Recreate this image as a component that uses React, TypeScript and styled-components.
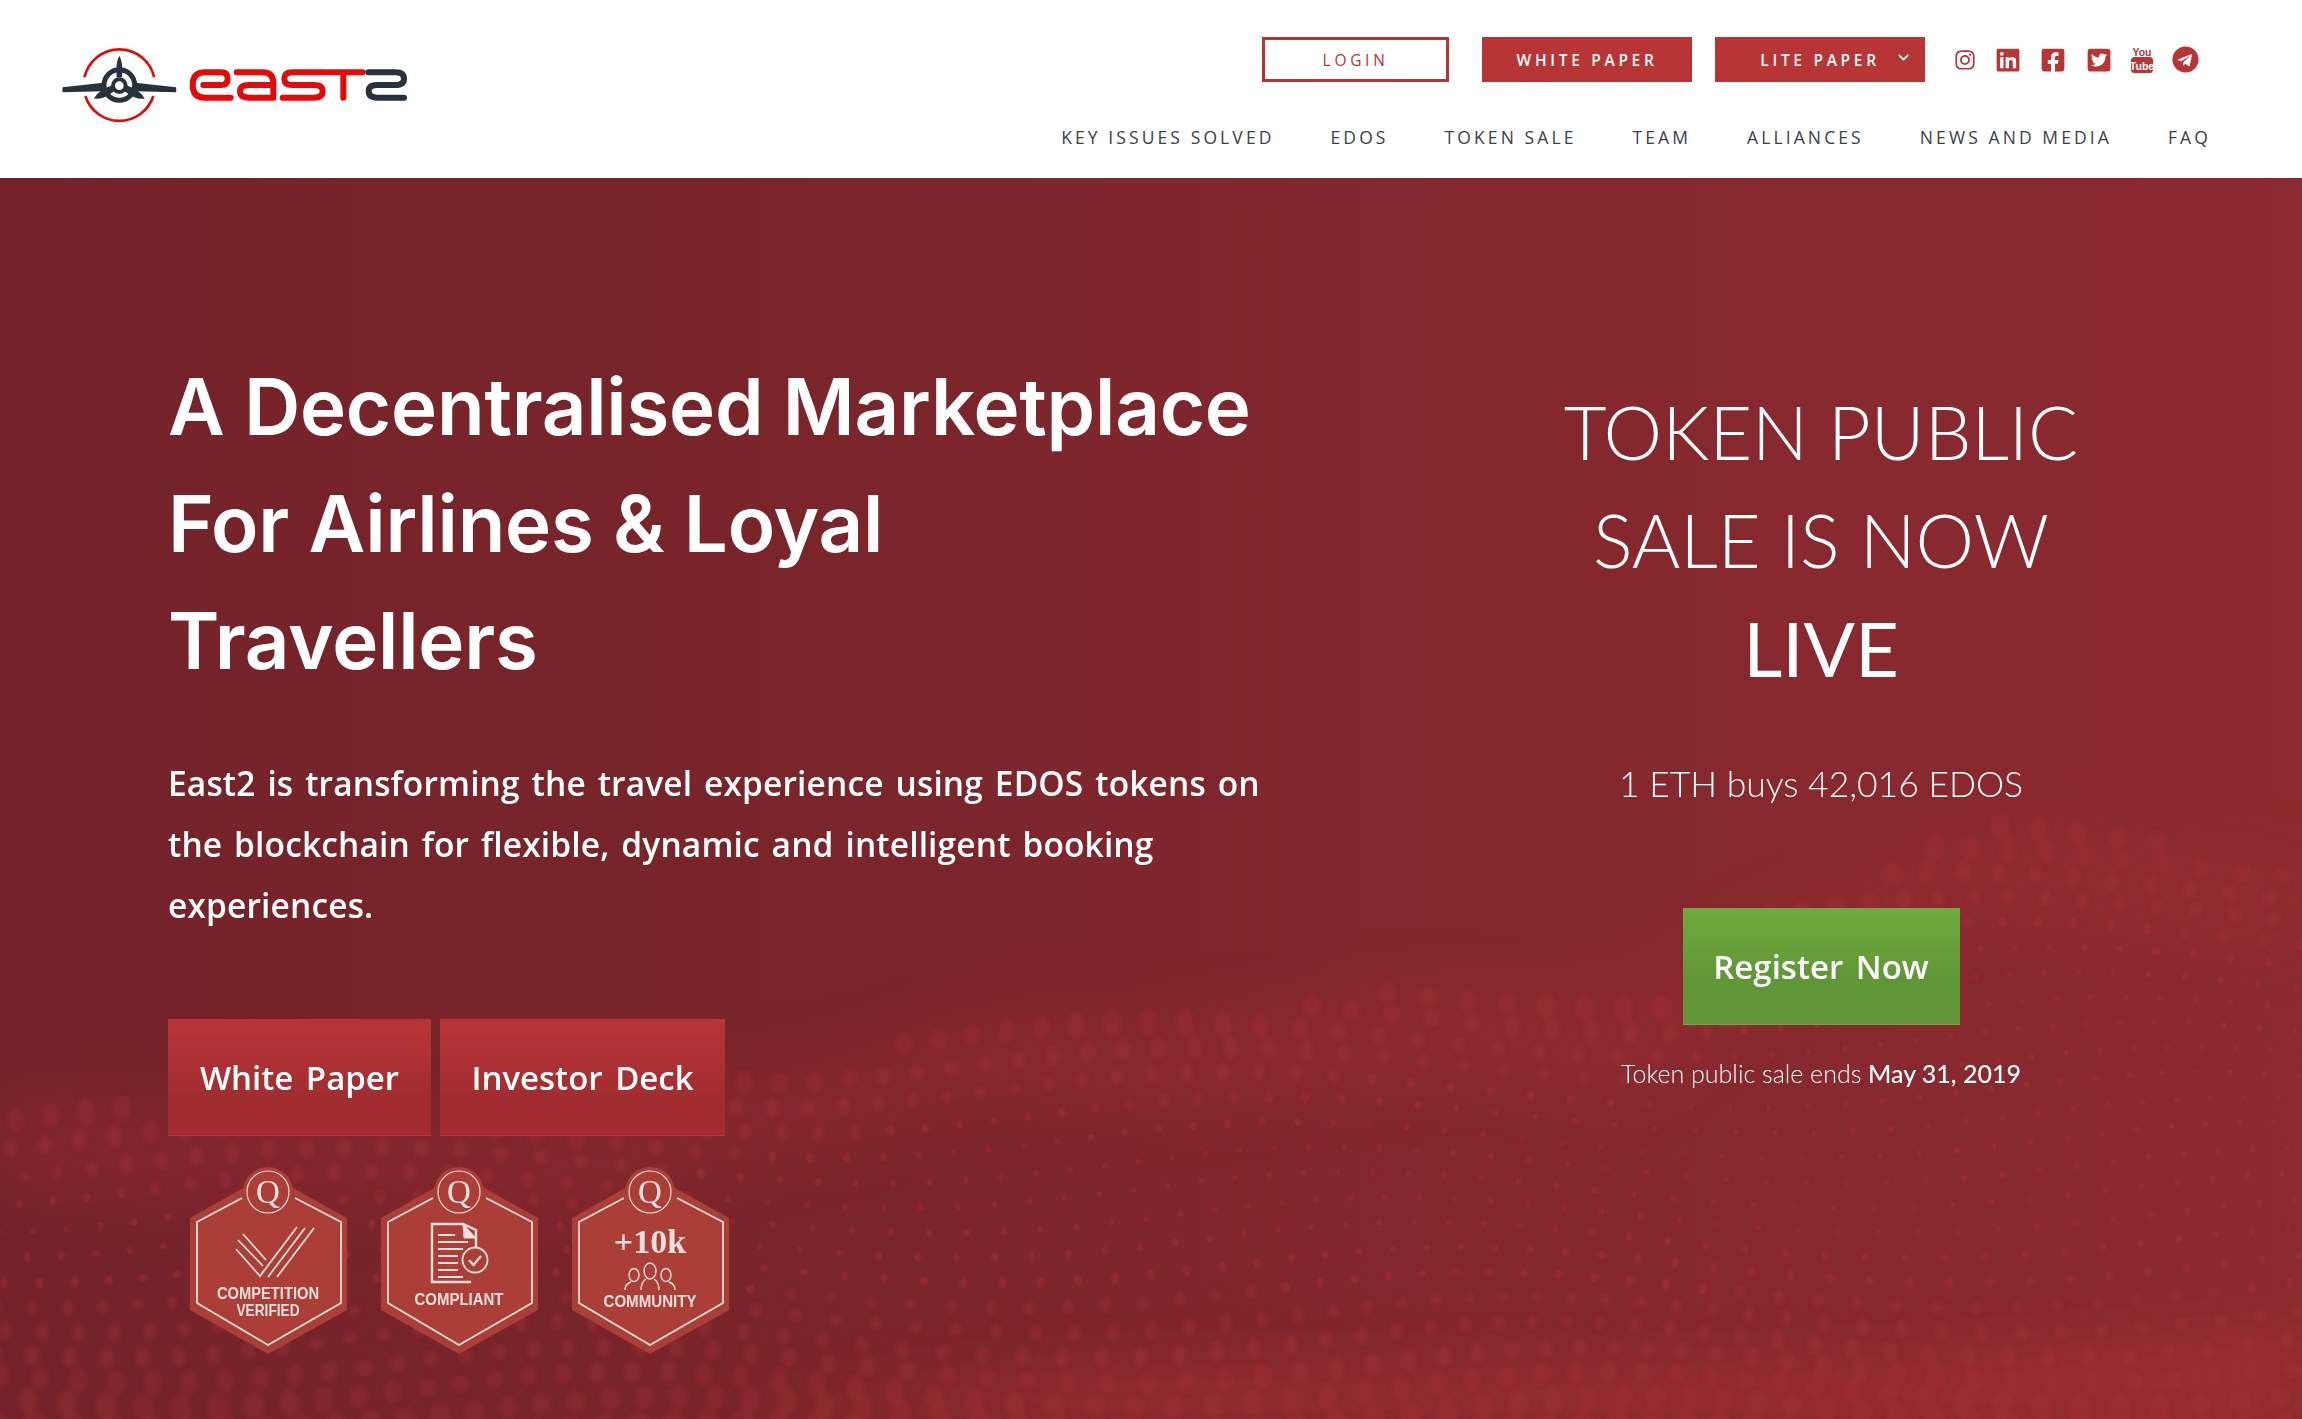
import React from 'react'
import styled, { createGlobalStyle } from 'styled-components'
import { FaInstagram, FaLinkedin, FaFacebookSquare, FaTwitterSquare, FaTelegram } from 'react-icons/fa'
import { FiChevronDown } from 'react-icons/fi'

const RED = '#b83535'
const HEAD = '"Lato", "Open Sans", sans-serif'
const BODY = '"Open Sans", "Noto Sans", sans-serif'

const GlobalStyle = createGlobalStyle`
  html, body { margin: 0; padding: 0; background: #fff; }
  * { box-sizing: border-box; }
`

const Page = styled.div`
  width: 2302px;
  height: 1419px;
  overflow: hidden;
  display: flex;
  flex-direction: column;
`

const Header = styled.header`
  height: 178px;
  flex: none;
  display: flex;
  justify-content: space-between;
  background: #fff;
  padding: 20px 91px 0 40px;
`

const LogoMark = styled.svg`
  width: 400px;
  height: 120px;
  display: block;
`

const HeaderRight = styled.div`
  display: flex;
  flex-direction: column;
  align-items: flex-end;
  padding-top: 17px;
`

const TopRow = styled.div`
  display: flex;
  align-items: center;
  margin-right: 12px;
`

const TopButton = styled.a<{ $outline?: boolean; $w: number; $ml: number }>`
  width: ${p => p.$w}px;
  margin-left: ${p => p.$ml}px;
  height: 45px;
  display: flex;
  align-items: center;
  justify-content: center;
  position: relative;
  font: ${p => (p.$outline ? 400 : 600)} 15.5px ${BODY};
  letter-spacing: 3.7px;
  color: ${p => (p.$outline ? RED : '#fff')};
  background: ${p => (p.$outline ? '#fff' : RED)};
  border: 3px solid ${RED};
`

const Caret = styled(FiChevronDown)`
  position: absolute;
  right: 10px;
  top: 9px;
  width: 17px;
  height: 17px;
  stroke-width: 2.4;
`

const Socials = styled.div`
  display: flex;
  align-items: center;
  margin-left: 29px;
  gap: 19.2px;
  color: ${RED};
`

const Social = styled.a<{ $w: number; $h: number }>`
  display: flex;
  color: ${RED};
  width: ${p => p.$w}px;
  height: ${p => p.$h}px;
  svg {
    width: 100%;
    height: 100%;
  }
`

const TubeSocial = styled(Social)`
  margin: -3px -2px;
`

const TubeText = styled.text`
  font-family: "Liberation Sans", sans-serif;
  font-weight: 700;
  text-anchor: middle;
`

const Nav = styled.nav`
  display: flex;
  gap: 56px;
  margin-top: 43px;
`

const NavLink = styled.a`
  font: 400 17.5px/24px ${BODY};
  letter-spacing: 3.1px;
  color: #3a4149;
  white-space: nowrap;
`

const Hero = styled.section`
  position: relative;
  flex: 1;
  display: grid;
  grid-template-columns: 1340px 1fr;
  overflow: hidden;
  background: linear-gradient(90deg, #74232a 0%, #79252a 35%, #84282e 65%, #8b2a30 100%);
`

const Backdrop = styled.svg`
  position: absolute;
  left: 0;
  top: 0;
  width: 2302px;
  height: 1241px;
`

const LeftCol = styled.div`
  position: relative;
  padding: 170px 0 0 168px;
`

const Title = styled.h1`
  margin: 0;
  font: 600 78px/117px "Inter", ${HEAD};
  letter-spacing: -0.25px;
  color: #fff;
  white-space: nowrap;
`

const Lead = styled.p`
  margin: 54px 0 0;
  font: 600 33.5px/61px ${BODY};
  word-spacing: 3px;
  letter-spacing: 0.14px;
  color: #fff;
  white-space: nowrap;
`

const CtaRow = styled.div`
  display: flex;
  gap: 9px;
  margin-top: 83px;
`

const Cta = styled.a<{ $green?: boolean; $w: number }>`
  width: ${p => p.$w}px;
  height: 117px;
  display: flex;
  align-items: center;
  justify-content: center;
  font: 600 33px ${BODY};
  word-spacing: 4px;
  color: #fff;
  background: ${p =>
    p.$green
      ? 'linear-gradient(180deg, #6fab3f 0%, #5f9636 65%)'
      : 'linear-gradient(180deg, #b93537 0%, #a22d30 65%)'};
  border-bottom: 1px solid ${p => (p.$green ? '#6fab3f' : '#c13338')};
`

const BadgeRow = styled.div`
  display: flex;
  gap: 1px;
  margin: 24px 0 0 12px;
`

const Badge = styled.svg`
  width: 190px;
  height: 200px;
  display: block;
`

const BadgeText = styled.text<{ $serif?: boolean }>`
  font-family: ${p => (p.$serif ? '"Liberation Serif", serif' : '"Liberation Sans", sans-serif')};
  font-weight: 700;
  fill: #f0dfdc;
  text-anchor: middle;
`

const BadgeQ = styled(BadgeText)`
  font-weight: 400;
`

const RightCol = styled.div`
  position: relative;
  padding-top: 200px;
  display: flex;
  flex-direction: column;
  align-items: center;
  color: #fff;
`

const Sale = styled.h2`
  margin: 0;
  text-align: center;
  font: 300 74px/108px ${HEAD};
  color: #fff;
  span {
    font-weight: 400;
    font-size: 76px;
  }
`

const Rate = styled.div`
  margin-top: 56px;
  font: 300 35.5px/50px ${HEAD};
`

const Ends = styled.div`
  margin-top: 30px;
  font: 300 25px/36px ${HEAD};
  b {
    font-weight: 500;
  }
`

const RegisterWrap = styled.div`
  margin-top: 99px;
`

const NAV = ['KEY ISSUES SOLVED', 'EDOS', 'TOKEN SALE', 'TEAM', 'ALLIANCES', 'NEWS AND MEDIA', 'FAQ']

function Logo() {
  return (
    <LogoMark viewBox="0 0 1200 360" fill="none">
      <path d="M133.5 172 A107 107 0 0 1 342.5 172" stroke="#e30a0a" strokeWidth="8" />
      <path d="M136 228 A107 107 0 0 0 340 228" stroke="#e30a0a" strokeWidth="8" />
      <path
        d="M68 202 L190 188 L190 214 L68 217 Q66 210 68 202 Z M408 202 L286 188 L286 214 L408 217 Q410 210 408 202 Z"
        fill="#28323c"
      />
      <circle cx="238" cy="195" r="46" stroke="#28323c" strokeWidth="15" fill="#fff" />
      <path
        d="M238 108 Q250 125 246 172 L230 172 Q226 125 238 108 Z M162 236 Q172 214 216 196 L224 212 Q190 240 162 236 Z M314 236 Q304 214 260 196 L252 212 Q286 240 314 236 Z"
        fill="#28323c"
      />
      <circle cx="238" cy="197" r="19" stroke="#28323c" strokeWidth="12" fill="#fff" />
      <g strokeWidth="18" strokeLinecap="round" strokeLinejoin="round">
        <g stroke="#e30a0a">
          <path d="M490 195 H543 Q563 195 563 176 Q563 157 543 157 H495 Q458 157 458 195 Q458 233 495 233 H572" />
          <path d="M590 157 H668 Q700 157 700 190 V233 H628 Q600 233 600 214 Q600 195 628 195 H690" />
          <path d="M852 157 H757 Q733 157 733 176 Q733 195 757 195 H822 Q848 195 848 214 Q848 233 822 233 H728" />
          <path d="M862 157 H968 M910 157 V233" />
        </g>
        <path
          stroke="#28323c"
          d="M985 157 H1065 Q1092 157 1092 176 Q1092 195 1065 195 H1012 Q986 195 986 214 Q986 233 1012 233 H1092"
        />
      </g>
    </LogoMark>
  )
}

function YouTubeIcon() {
  return (
    <svg viewBox="-2 -3 26 33">
      <TubeText x="11" y="10" fontSize="10.5" fill={RED}>
        You
      </TubeText>
      <rect x="0" y="11" width="22" height="16" rx="3.5" fill={RED} />
      <TubeText x="11" y="23.5" fontSize="10.5" fill="#fff">
        Tube
      </TubeText>
    </svg>
  )
}

function BadgeFrame({ children }: { children: React.ReactNode }) {
  return (
    <Badge viewBox="0 0 190 200">
      <path d="M10 58 L88 14 L167 58 V150 L88 194 L10 150 Z" fill="#ab3f38" />
      <circle cx="88" cy="32" r="25" fill="#ab3f38" />
      <path
        d="M62 38 L17 62 V143 L88 185 L161 143 V62 L115 38"
        fill="none"
        stroke="#f0dfdc"
        strokeWidth="1.8"
      />
      <circle cx="88" cy="32" r="21" fill="none" stroke="#f0dfdc" strokeWidth="1.2" />
      <BadgeQ $serif x="88" y="43" fontSize="33">
        Q
      </BadgeQ>
      {children}
    </Badge>
  )
}

function Label({ y, w, children }: { y: number; w: number; children: string }) {
  return (
    <BadgeText x="88" y={y} fontSize="16" textLength={w} lengthAdjust="spacingAndGlyphs">
      {children}
    </BadgeText>
  )
}

function CompetitionBadge() {
  return (
    <BadgeFrame>
      <g fill="none" stroke="#f0dfdc" strokeWidth="1.8">
        <path d="M56 89 L80 116 L117 67" />
        <path d="M58 80 L83 106 M88 117 L125 68" />
        <path d="M63 74 L86 100 M97 117 L134 68" />
      </g>
      <Label y={139} w={102}>COMPETITION</Label>
      <Label y={156} w={63}>VERIFIED</Label>
    </BadgeFrame>
  )
}

function CompliantBadge() {
  return (
    <BadgeFrame>
      <g fill="none" stroke="#f0dfdc">
        <path d="M105 88 V70 L92 64 H61 V122 H100" strokeWidth="2.4" />
        <path d="M92 64 L105 78 H93 Z" fill="#f0dfdc" strokeWidth="1" />
        <path d="M67 75 H84 M67 82 H97 M67 89 H92 M67 96 H87 M67 103 H87 M67 110 H87 M67 117 H92" strokeWidth="2.2" />
        <circle cx="104" cy="100" r="12.5" fill="#ab3f38" strokeWidth="1.8" />
        <path d="M98 100 L102.5 105 L110 96" strokeWidth="2.2" />
      </g>
      <Label y={145} w={89}>COMPLIANT</Label>
    </BadgeFrame>
  )
}

function CommunityBadge() {
  return (
    <BadgeFrame>
      <BadgeText $serif x="88" y="93" fontSize="34">
        +10k
      </BadgeText>
      <g fill="none" stroke="#f0dfdc" strokeWidth="1.4">
        <ellipse cx="88" cy="111" rx="6" ry="8" />
        <ellipse cx="72" cy="115" rx="5" ry="6.5" />
        <ellipse cx="104" cy="115" rx="5" ry="6.5" />
        <path d="M79 130 Q79 122 84 119 M97 130 Q97 122 92 119" />
        <path d="M63 130 Q63 124 69 122 M113 130 Q113 124 107 122" />
      </g>
      <Label y={147} w={93}>COMMUNITY</Label>
    </BadgeFrame>
  )
}

// top of the dotted wave: x -> y inside the hero
const CREST: [number, number][] = [
  [0, 920], [300, 935], [560, 945], [800, 885], [1000, 835], [1150, 842], [1444, 810], [1620, 825], [1800, 725], [2000, 645], [2302, 680],
]

function crest(x: number) {
  for (let i = 1; i < CREST.length; i++) {
    const [x0, y0] = CREST[i - 1]
    const [x1, y1] = CREST[i]
    if (x <= x1) {
      const t = (x - x0) / (x1 - x0)
      const s = t * t * (3 - 2 * t)
      return y0 + (y1 - y0) * s
    }
  }
  return CREST[CREST.length - 1][1]
}

type Dot = { x: number; y: number; rx: number; ry: number; o: number }

function buildDots() {
  const big: Dot[] = []
  const small: Dot[] = []
  for (let c = 0; c < 64; c++) {
    for (let r = 0; r < 30; r++) {
      const baseX = c * 37 - 20 + (r % 2) * 9
      const x = baseX + 16 * Math.sin(r * 0.28 + c * 0.2)
      const y = 1262 - r * 25 + 18 * Math.sin(c * 0.24 + r * 0.2)
      const top = crest(x)
      if (y < top) continue
      const lower = y > 1040 ? (y - 1040) / 200 : 0
      const upper = y < top + 130 ? (top + 130 - y) / 130 : 0
      const rad = 2.6 + 8 * Math.pow(lower, 1.4) + 7 * Math.pow(upper, 1.2)
      const stretch = 1 + 0.45 * Math.abs(Math.sin(c * 0.19 + r * 0.31))
      const dot = { x, y, rx: rad, ry: rad * stretch, o: 0.42 - 0.14 * Math.max(lower, upper) }
      if (rad > 4.5) big.push(dot)
      else small.push(dot)
    }
  }
  return { big, small }
}

const DOTS = buildDots()

function wavePath(offset: number, thick: number) {
  const pts: string[] = []
  for (let x = 0; x <= 2302; x += 50) pts.push(`${x} ${crest(x) + offset}`)
  const back: string[] = []
  for (let x = 2302; x >= 0; x -= 50) back.push(`${x} ${crest(x) + offset + thick}`)
  return `M${pts.join(' L')} L${back.join(' L')} Z`
}

function WaveBackdrop() {
  return (
    <Backdrop viewBox="0 0 2302 1241">
      <defs>
        <filter id="soft" x="-10%" y="-30%" width="120%" height="160%">
          <feGaussianBlur stdDeviation="30" />
        </filter>
        <filter id="bigDot">
          <feGaussianBlur stdDeviation="2.4" />
        </filter>
        <filter id="smallDot">
          <feGaussianBlur stdDeviation="0.8" />
        </filter>
      </defs>
      <path d={wavePath(0, 90)} fill="#a22f37" opacity="0.32" filter="url(#soft)" />
      <path
        d="M700 1241 C900 1215 1050 1190 1250 1195 C1600 1205 2000 1190 2302 1150 V1241 Z"
        fill="#a02d35"
        opacity="0.8"
        filter="url(#soft)"
      />
      <g fill="#aa323b" filter="url(#bigDot)">
        {DOTS.big.map((d, i) => (
          <ellipse key={i} cx={d.x} cy={d.y} rx={d.rx} ry={d.ry} opacity={d.o} />
        ))}
      </g>
      <g fill="#b0333d" filter="url(#smallDot)">
        {DOTS.small.map((d, i) => (
          <ellipse key={i} cx={d.x} cy={d.y} rx={d.rx} ry={d.ry} opacity={d.o} />
        ))}
      </g>
    </Backdrop>
  )
}

export default function App() {
  return (
    <Page>
      <GlobalStyle />
      <Header>
        <Logo />
        <HeaderRight>
          <TopRow>
            <TopButton $outline $w={187} $ml={0}>LOGIN</TopButton>
            <TopButton $w={210} $ml={33}>WHITE PAPER</TopButton>
            <TopButton $w={210} $ml={23}>
              LITE PAPER
              <Caret />
            </TopButton>
            <Socials>
              <Social $w={22} $h={22}><FaInstagram /></Social>
              <Social $w={26} $h={26}><FaLinkedin /></Social>
              <Social $w={26} $h={26}><FaFacebookSquare /></Social>
              <Social $w={26} $h={26}><FaTwitterSquare /></Social>
              <TubeSocial $w={26} $h={33}><YouTubeIcon /></TubeSocial>
              <Social $w={27} $h={27}><FaTelegram /></Social>
            </Socials>
          </TopRow>
          <Nav>
            {NAV.map(item => (
              <NavLink key={item}>{item}</NavLink>
            ))}
          </Nav>
        </HeaderRight>
      </Header>
      <Hero>
        <WaveBackdrop />
        <LeftCol>
          <Title>
            A Decentralised Marketplace
            <br />
            For Airlines &amp; Loyal
            <br />
            Travellers
          </Title>
          <Lead>
            East2 is transforming the travel experience using EDOS tokens on
            <br />
            the blockchain for flexible, dynamic and intelligent booking
            <br />
            experiences.
          </Lead>
          <CtaRow>
            <Cta $w={263}>White Paper</Cta>
            <Cta $w={285}>Investor Deck</Cta>
          </CtaRow>
          <BadgeRow>
            <CompetitionBadge />
            <CompliantBadge />
            <CommunityBadge />
          </BadgeRow>
        </LeftCol>
        <RightCol>
          <Sale>
            TOKEN PUBLIC
            <br />
            SALE IS NOW
            <br />
            <span>LIVE</span>
          </Sale>
          <Rate>1 ETH buys 42,016 EDOS</Rate>
          <RegisterWrap>
            <Cta $green $w={277}>Register Now</Cta>
          </RegisterWrap>
          <Ends>
            Token public sale ends <b>May 31, 2019</b>
          </Ends>
        </RightCol>
      </Hero>
    </Page>
  )
}
